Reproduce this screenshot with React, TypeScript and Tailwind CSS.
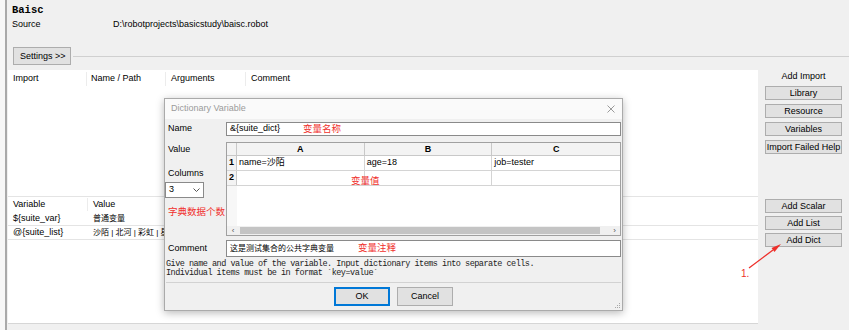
import { ReactNode } from "react";

const Btn = ({ children, className = "" }: { children: ReactNode; className?: string }) => (
  <div
    className={`flex items-center justify-center border border-[#adadad] bg-[#e1e1e1] text-[9px] leading-none text-black ${className}`}
  >
    {children}
  </div>
);

const App = () => {
  return (
    <div className="relative flex h-[330px] w-[849px] overflow-hidden bg-[#f0f0f0] font-['Liberation_Sans','Noto_Sans_CJK_SC',sans-serif] text-[9px] text-black">
      <div className="w-[5px] bg-[#f7f7f7]" />
      <div className="w-[2px] bg-[#a9a9a9]" />

      <div className="flex flex-1 flex-col">
        {/* suite header */}
        <div className="pl-[5px] pt-[3px]">
          <div className="h-[15px] font-['Liberation_Mono',monospace] text-[10.5px] font-bold leading-[15px]">Baisc</div>
          <div className="flex h-[14px] items-center">
            <span className="w-[101px]">Source</span>
            <span>D:\robotprojects\basicstudy\baisc.robot</span>
          </div>
        </div>

        <div className="mt-[15px] flex items-center pl-[6px]">
          <Btn className="h-[18px] w-[58px] !justify-start pl-[6px]">Settings &gt;&gt;</Btn>
          <div className="ml-[2px] h-px flex-1 bg-[#d0d0d0]" />
        </div>

        {/* tables + side buttons */}
        <div className="mt-[5px] flex h-[253px]">
          <div className="ml-px flex flex-1 flex-col bg-white">
            <div className="flex h-[18px] items-center">
              <div className="w-[79px] border-r border-[#ececec] pl-[5px]">Import</div>
              <div className="w-[79px] border-r border-[#ececec] pl-[4px]">Name / Path</div>
              <div className="w-[80px] border-r border-[#ececec] pl-[5px]">Arguments</div>
              <div className="pl-[5px]">Comment</div>
            </div>
            <div className="h-[108px]" />

            <div className="flex h-[16px] items-center border-t border-[#e4e4e4]">
              <div className="w-[80px] border-r border-[#ececec] pl-[5px]">Variable</div>
              <div className="pl-[5px]">Value</div>
            </div>
            <div className="flex h-[14px] items-center border-b border-[#e4e4e4]">
              <div className="w-[80px] pl-[5px]">${"{suite_var}"}</div>
              <div className="pl-[5px] text-[8px]">普通变量</div>
            </div>
            <div className="flex h-[14px] items-center border-b border-[#e4e4e4]">
              <div className="w-[80px] pl-[5px]">@{"{suite_list}"}</div>
              <div className="pl-[5px] text-[8px]">沙陌 | 北河 | 彩虹 | 星辰</div>
            </div>
          </div>

          <div className="flex w-[91px] flex-col px-[7px]">
            <div className="h-[13px] text-center leading-[13px]">Add Import</div>
            <div className="mt-[3px] flex flex-col gap-[4px]">
              <Btn className="h-[14px]">Library</Btn>
              <Btn className="h-[14px]">Resource</Btn>
              <Btn className="h-[14px]">Variables</Btn>
              <Btn className="h-[14px]">Import Failed Help</Btn>
            </div>
            <div className="mt-[45px] flex flex-col gap-[3px]">
              <Btn className="h-[14px]">Add Scalar</Btn>
              <Btn className="h-[14px]">Add List</Btn>
              <Btn className="h-[14px]">Add Dict</Btn>
            </div>
          </div>
        </div>
        <div className="ml-px mr-[91px] h-px bg-[#d6d6d6]" />
      </div>

      {/* Dictionary Variable dialog */}
      <div className="absolute left-[164px] top-[98px] flex h-[213px] w-[459px] flex-col border border-[#aaaaaa] bg-[#f0f0f0] shadow-[0_2px_8px_rgba(0,0,0,0.28)]">
        <div className="flex h-[20px] items-center justify-between bg-[#fafafa] pl-[6px] pr-[7px]">
          <span className="text-[9px] text-[#9a9a9a]">Dictionary Variable</span>
          <svg width="8" height="8" viewBox="0 0 8 8" className="stroke-[#9a9a9a]">
            <path d="M0.5 0.5L7.5 7.5M7.5 0.5L0.5 7.5" strokeWidth="1" />
          </svg>
        </div>

        <div className="mt-[3px] flex items-center">
          <div className="w-[61px] pl-[3px]">Name</div>
          <div className="flex h-[14px] w-[395px] items-center border border-[#8a8a8a] bg-white pl-[3px]">
            <span className="inline-block w-[73px]">&amp;{"{suite_dict}"}</span>
            <span className="text-[9.5px] text-[#f0302c]">变量名称</span>
          </div>
        </div>

        <div className="mt-[6px] flex">
          <div className="flex w-[61px] flex-col">
            <div className="h-[14px] pl-[3px] leading-[14px]">Value</div>
            <div className="mt-[10px] h-[14px] pl-[3px] leading-[14px]">Columns</div>
            <div className="mt-[2px] flex h-[16px] w-[39px] items-center justify-between border border-[#8a8a8a] bg-white pl-[3px] pr-[3px]">
              <span>3</span>
              <svg width="7" height="4" viewBox="0 0 7 4" fill="none" stroke="#555">
                <path d="M0.5 0.5L3.5 3.5L6.5 0.5" />
              </svg>
            </div>
            <div className="mt-[6px] h-[16px] pl-[3px] text-[9.5px] leading-[16px] text-[#f0302c]">字典数据个数</div>
          </div>

          <div className="relative flex h-[94px] w-[395px] flex-col border border-[#a0a0a0] bg-white">
            <div className="grid h-[13px] grid-cols-[10px_1fr_1fr_1fr] border-b border-[#c8c8c8] bg-[#f3f3f3] text-[9px] font-bold">
              <div className="border-r border-[#c8c8c8]" />
              <div className="flex items-center justify-center border-r border-[#c8c8c8]">A</div>
              <div className="flex items-center justify-center border-r border-[#c8c8c8]">B</div>
              <div className="flex items-center justify-center">C</div>
            </div>
            <div className="grid h-[15px] grid-cols-[10px_1fr_1fr_1fr] border-b border-[#d4d4d4]">
              <div className="flex items-center justify-center border-r border-[#c8c8c8] bg-[#f3f3f3] font-bold">1</div>
              <div className="flex items-center border-r border-[#d4d4d4] pl-[2px]">name=沙陌</div>
              <div className="flex items-center border-r border-[#d4d4d4] pl-[2px]">age=18</div>
              <div className="flex items-center pl-[2px]">job=tester</div>
            </div>
            <div className="grid h-[15px] grid-cols-[10px_1fr_1fr_1fr] border-b border-[#d4d4d4]">
              <div className="flex items-center justify-center border-r border-[#c8c8c8] bg-[#f3f3f3] font-bold">2</div>
              <div className="border-r border-[#d4d4d4]" />
              <div className="border-r border-[#d4d4d4]" />
              <div />
            </div>
            <div className="flex flex-1">
              <div className="w-[10px] bg-[#f7f7f7]" />
              <div className="flex-1 bg-white" />
            </div>
            <div className="flex h-[9px] items-center bg-[#f0f0f0] text-[8px] text-[#555]">
              <div className="flex w-[12px] items-center justify-center leading-none">&lsaquo;</div>
              <div className="ml-[1px] h-[7px] w-[360px] bg-[#c4c4c4]" />
              <div className="flex-1" />
              <div className="flex w-[11px] items-center justify-center leading-none">&rsaquo;</div>
            </div>
            <span className="absolute left-[124px] top-[30px] text-[9.5px] leading-[16px] text-[#f0302c]">变量值</span>
          </div>
        </div>

        <div className="mt-[4px] flex items-center">
          <div className="w-[61px] pl-[3px]">Comment</div>
          <div className="flex h-[17px] w-[395px] items-center border border-[#8a8a8a] bg-white pl-[3px]">
            <span className="inline-block w-[128px] text-[8px]">这是测试集合的公共字典变量</span>
            <span className="text-[9.5px] text-[#f0302c]">变量注释</span>
          </div>
        </div>

        <div className="mt-[3px] pl-[1px] font-['Liberation_Mono',monospace] text-[8.5px] leading-[8.5px] tracking-[-0.5px] text-[#222]">
          <div>Give name and value of the variable. Input dictionary items into separate cells.</div>
          <div>Individual items must be in format `key=value`</div>
        </div>

        <div className="mx-px mt-[5px] h-px bg-[#d2d2d2]" />

        <div className="relative mt-[4px] flex flex-1 justify-center gap-[7px]">
          <Btn className="h-[19px] w-[56px] !border-[#0078d7] outline outline-1 -outline-offset-2 outline-[#0078d7]">OK</Btn>
          <Btn className="h-[19px] w-[56px]">Cancel</Btn>
          <svg width="7" height="7" viewBox="0 0 7 7" className="absolute bottom-[1px] right-[1px] fill-[#a8a8a8]">
            <rect x="5" y="1" width="1" height="1" />
            <rect x="3" y="3" width="1" height="1" />
            <rect x="5" y="3" width="1" height="1" />
            <rect x="1" y="5" width="1" height="1" />
            <rect x="3" y="5" width="1" height="1" />
            <rect x="5" y="5" width="1" height="1" />
          </svg>
        </div>
      </div>

      {/* red annotation arrow */}
      <svg className="pointer-events-none absolute left-0 top-0" width="849" height="330">
        <path d="M749 268L773 250" stroke="#ee2f2a" strokeWidth="1.3" />
        <path d="M781 244L774.5 252L771.5 248Z" fill="#ee2f2a" />
      </svg>
      <span className="absolute left-[741px] top-[267px] text-[10px] leading-[14px] text-[#ee2f2a]">1.</span>
    </div>
  );
};

export default App;
